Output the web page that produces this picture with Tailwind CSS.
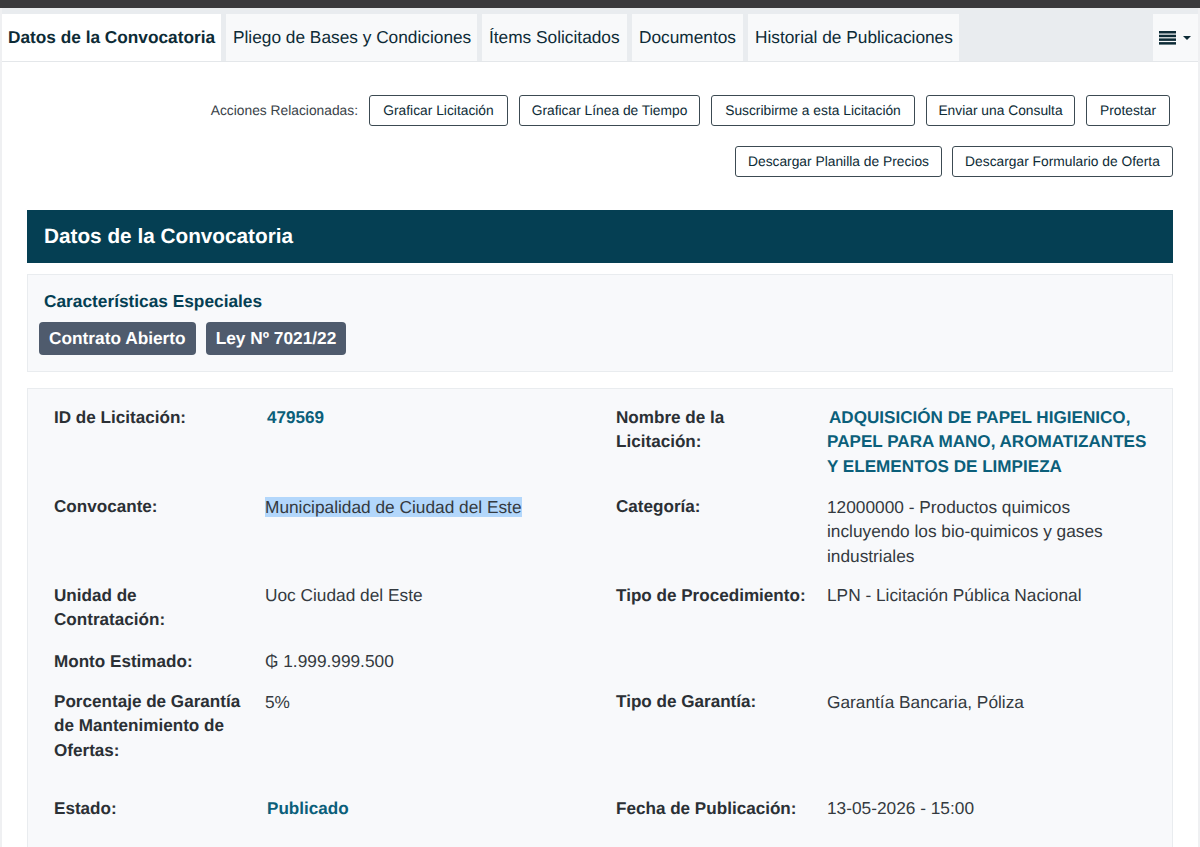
<!DOCTYPE html>
<html lang="es">
  <head>
    <meta charset="UTF-8" />
    <title>Datos de la Convocatoria</title>
    <script src="https://cdn.jsdelivr.net/npm/@tailwindcss/browser@4"></script>
  </head>
  <body class="bg-white h-[847px] overflow-hidden font-['Liberation_Sans',sans-serif] text-[#212529] [text-rendering:geometricPrecision]">
    <div class="h-2 bg-[#3a3a3c]"></div>

    <div class="h-[839px] overflow-hidden border-x-2 border-[#eff0f2]">
      <!-- Tabs -->
      <div class="flex h-[54px] bg-[#e9ecef] pt-[6px] border-b border-[#e4e7ea]">
        <div class="flex items-center w-[219px] pl-[6px] bg-white text-[17.25px] font-bold text-[#0d2b36]">Datos de la Convocatoria</div>
        <div class="flex items-center ml-[5px] w-[251px] pl-[7px] bg-[#f8f9fa] text-[17.3px] text-[#0d2b36]">Pliego de Bases y Condiciones</div>
        <div class="flex items-center ml-[5px] w-[145px] pl-[7px] bg-[#f8f9fa] text-[17.3px] text-[#0d2b36]">Ítems Solicitados</div>
        <div class="flex items-center ml-[5px] w-[111px] pl-[7px] bg-[#f8f9fa] text-[17.3px] text-[#0d2b36]">Documentos</div>
        <div class="flex items-center ml-[5px] w-[211px] pl-[7px] bg-[#f8f9fa] text-[17.3px] text-[#0d2b36]">Historial de Publicaciones</div>
        <div class="flex items-center gap-[7px] ml-auto w-[45px] pl-[6px] bg-[#f8f9fa]">
          <svg width="17" height="14" viewBox="0 0 17 14" fill="#0d2b36">
            <rect y="0" width="17" height="2.5" />
            <rect y="3.7" width="17" height="2.5" />
            <rect y="7.4" width="17" height="2.5" />
            <rect y="11.1" width="17" height="2.5" />
          </svg>
          <span class="w-0 h-0 border-x-[4px] border-x-transparent border-t-[4px] border-t-[#0d2b36]"></span>
        </div>
      </div>

      <div class="px-[25px]">
        <!-- Actions -->
        <div class="flex flex-col items-end gap-5 pt-[33px]">
          <div class="flex items-center gap-[11px] pr-[3px] text-[13.8px]">
            <span class="pt-px text-[#3a4248]">Acciones Relacionadas:</span>
            <a class="flex items-center justify-center w-[139px] h-[31px] pt-px border border-[#3c4a52] rounded-[3px] text-[#0d2b36]">Graficar Licitación</a>
            <a class="flex items-center justify-center w-[181px] h-[31px] pt-px border border-[#3c4a52] rounded-[3px] text-[#0d2b36]">Graficar Línea de Tiempo</a>
            <a class="flex items-center justify-center w-[204px] h-[31px] pt-px border border-[#3c4a52] rounded-[3px] text-[#0d2b36]">Suscribirme a esta Licitación</a>
            <a class="flex items-center justify-center w-[149px] h-[31px] pt-px border border-[#3c4a52] rounded-[3px] text-[#0d2b36]">Enviar una Consulta</a>
            <a class="flex items-center justify-center w-[84px] h-[31px] pt-px border border-[#3c4a52] rounded-[3px] text-[#0d2b36]">Protestar</a>
          </div>
          <div class="flex items-center gap-[10px] text-[13.8px]">
            <a class="flex items-center justify-center w-[207px] h-[31px] pt-[2px] border border-[#3c4a52] rounded-[3px] text-[#0d2b36]">Descargar Planilla de Precios</a>
            <a class="flex items-center justify-center w-[221px] h-[31px] pt-[2px] border border-[#3c4a52] rounded-[3px] text-[#0d2b36]">Descargar Formulario de Oferta</a>
          </div>
        </div>

        <!-- Section header -->
        <h1 class="flex items-center h-[53px] mt-[33px] pl-[17px] bg-[#053f53] text-white text-[20.75px] font-bold">Datos de la Convocatoria</h1>

        <!-- Special features -->
        <div class="h-[98px] mt-[11px] pt-[17px] pl-[11px] bg-[#f8f9fb] border border-[#e9ecef]">
          <h2 class="pl-[5px] text-[17.3px] leading-[19px] font-bold text-[#053f53]">Características Especiales</h2>
          <div class="flex gap-[10px] mt-[11px]">
            <span class="flex items-center h-[33px] px-[10px] bg-[#4f5b6d] rounded text-white text-[17.3px] font-bold">Contrato Abierto</span>
            <span class="flex items-center h-[33px] px-[10px] bg-[#4f5b6d] rounded text-white text-[17.3px] font-bold">Ley Nº 7021/22</span>
          </div>
        </div>

        <!-- Data -->
        <div class="mt-[16px] h-[600px] pt-[16px] pl-[26px] bg-[#f8f9fb] border border-[#e9ecef] text-[17.3px] leading-[24.5px] text-[#343a40]">
          <div class="grid grid-cols-[211px_351px_211px_320px] pb-[15.5px]">
            <b class="pr-4 pt-[0.5px] text-[17.1px] text-[#2b3035]">ID de Licitación:</b>
            <b class="pl-[2px] pt-[0.5px] text-[17.1px] text-[#0b5f7a]">479569</b>
            <b class="pr-4 pt-[0.5px] text-[17.1px] text-[#2b3035]">Nombre de la Licitación:</b>
            <b class="pt-[0.5px] text-[17.1px] text-[#0b5f7a]"><span class="pl-[2px]">ADQUISICIÓN DE PAPEL HIGIENICO,</span> PAPEL PARA MANO, AROMATIZANTES Y ELEMENTOS DE LIMPIEZA</b>
          </div>
          <div class="grid grid-cols-[211px_351px_211px_320px] pb-[15px]">
            <b class="pr-4 text-[17.1px] text-[#2b3035]">Convocante:</b>
            <div><span class="bg-[#b3d7fb]">Municipalidad de Ciudad del Este</span></div>
            <b class="pr-4 text-[17.1px] text-[#2b3035]">Categoría:</b>
            <div>12000000 - Productos quimicos incluyendo los bio-quimicos y gases industriales</div>
          </div>
          <div class="grid grid-cols-[211px_351px_211px_320px] pb-[16.5px]">
            <b class="pr-10 pt-[0.5px] text-[17.1px] text-[#2b3035]">Unidad de Contratación:</b>
            <div>Uoc Ciudad del Este</div>
            <b class="pr-4 pt-[0.5px] text-[17.1px] text-[#2b3035]">Tipo de Procedimiento:</b>
            <div>LPN - Licitación Pública Nacional</div>
          </div>
          <div class="grid grid-cols-[211px_351px_211px_320px] pb-[15.5px]">
            <b class="pr-4 pt-[0.5px] text-[17.1px] text-[#2b3035]">Monto Estimado:</b>
            <div>₲ 1.999.999.500</div>
          </div>
          <div class="grid grid-cols-[211px_351px_211px_320px] pb-[33px]">
            <b class="pr-4 text-[17.1px] text-[#2b3035]">Porcentaje de Garantía de Mantenimiento de Ofertas:</b>
            <div>5%</div>
            <b class="pr-4 text-[17.1px] text-[#2b3035]">Tipo de Garantía:</b>
            <div>Garantía Bancaria, Póliza</div>
          </div>
          <div class="grid grid-cols-[211px_351px_211px_320px]">
            <b class="pr-4 pt-[0.5px] text-[17.1px] text-[#2b3035]">Estado:</b>
            <b class="pl-[2px] pt-[0.5px] text-[17.1px] text-[#0b5f7a]">Publicado</b>
            <b class="pr-4 pt-[0.5px] text-[17.1px] text-[#2b3035]">Fecha de Publicación:</b>
            <div>13-05-2026 - 15:00</div>
          </div>
        </div>
      </div>
    </div>
  </body>
</html>
